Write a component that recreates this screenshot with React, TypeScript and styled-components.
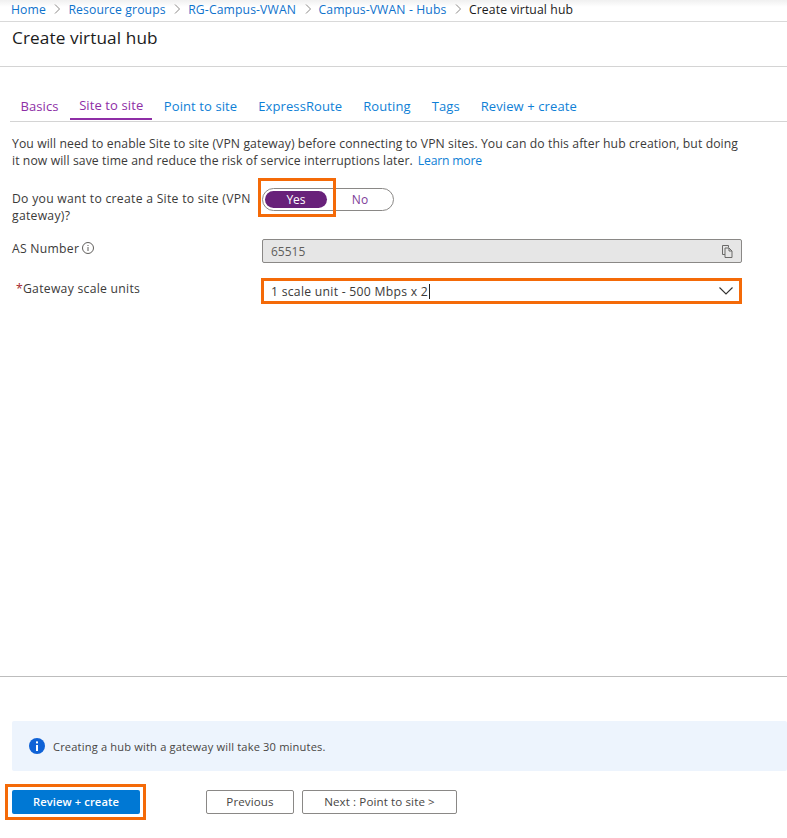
import React from "react";
import styled, { createGlobalStyle } from "styled-components";

const GlobalStyle = createGlobalStyle`
  html, body {
    margin: 0;
    padding: 0;
    background: #fff;
  }
  body {
    font-family: "Open Sans", "Noto Sans", "Liberation Sans", sans-serif;
    color: #323130;
    overflow: hidden;
  }
`;

const Page = styled.div`
  width: 787px;
  height: 838px;
  display: flex;
  flex-direction: column;
`;

const Breadcrumb = styled.nav`
  box-sizing: content-box;
  border-bottom: 1px solid #d9d9d9;
  background: linear-gradient(#f0f0f0, #fff 7px);
  display: flex;
  align-items: center;
  padding: 0 0 3px 11px;
  height: 18px;
  font-size: 12.2px;
  letter-spacing: 0.12px;
  white-space: nowrap;
`;

const Crumb = styled.a<{ $current?: boolean }>`
  color: ${(p) => (p.$current ? "#1a1a1a" : "#0f72cc")};
`;

const CrumbSep = styled.svg`
  width: 8px;
  height: 10px;
  margin: 0 7px 0 7.5px;
  fill: none;
  stroke: #8a8886;
  stroke-width: 1;
`;

const TitleBar = styled.header`
  height: 44px;
  border-bottom: 1px solid #d4d4d4;
  padding-left: 12px;
`;

const Title = styled.h1`
  margin: 5px 0 0;
  font-size: 17.2px;
  line-height: 22px;
  font-weight: 400;
  color: #1b1b1b;
  letter-spacing: 0.1px;
`;

const Tabs = styled.div`
  margin: 29px 0 0 10px;
  height: 25px;
  border-bottom: 1px solid #d4d4d4;
  display: flex;
  font-size: 13px;
  letter-spacing: 0.1px;
`;

const Tab = styled.div<{ $color: string; $active?: boolean }>`
  height: 24px;
  padding: 0 ${(p) => (p.$active ? "9px" : "11px")};
  margin: 0 ${(p) => (p.$active ? "1px" : "-0.5px")};
  display: flex;
  align-items: center;
  padding-bottom: 5px;
  box-sizing: border-box;
  color: ${(p) => p.$color};
  border-bottom: ${(p) => (p.$active ? "2px solid #8e2ea6" : "none")};
  white-space: nowrap;
`;

const Content = styled.main`
  flex: 1;
  padding: 13px 0 0 12px;
`;

const Intro = styled.p`
  margin: 0;
  width: 760px;
  font-size: 12.2px;
  line-height: 17px;
  letter-spacing: 0.09px;
  color: #3b3a39;
`;

const Link = styled.a`
  color: #0f7fd6;
  margin-left: 5px;
  letter-spacing: -0.2px;
`;

const Row = styled.div<{ $top: number; $height: number }>`
  margin-top: ${(p) => p.$top}px;
  height: ${(p) => p.$height}px;
  display: grid;
  grid-template-columns: 250px 480px;
  font-size: 12.2px;
  letter-spacing: 0.27px;
  line-height: 17px;
  color: #3b3a39;
`;

const FieldLabel = styled.div<{ $indent?: number; $pad?: number }>`
  padding-left: ${(p) => p.$indent ?? 0}px;
  padding-top: ${(p) => p.$pad ?? 0}px;
`;

const Required = styled.span`
  color: #a4262c;
`;

const InfoGlyph = styled.svg`
  width: 12px;
  height: 12px;
  margin-left: 3px;
  vertical-align: -1px;
  fill: none;
  stroke: #605e5c;
`;

const ToggleWrap = styled.div`
  position: relative;
  width: 132px;
  height: 23px;
  margin-top: 1px;
`;

const Toggle = styled.div`
  width: 132px;
  height: 23px;
  box-sizing: border-box;
  border: 1px solid #8a8886;
  border-radius: 12px;
  display: grid;
  grid-template-columns: 62px 1fr;
  padding: 2px;
  font-size: 12px;
  letter-spacing: 0;
`;

const ToggleOption = styled.div<{ $on?: boolean }>`
  border-radius: 9px;
  display: flex;
  align-items: center;
  justify-content: center;
  padding-left: ${(p) => (p.$on ? 0 : 2)}px;
  background: ${(p) => (p.$on ? "#68217a" : "transparent")};
  color: ${(p) => (p.$on ? "#fff" : "#7d3c98")};
`;

const Highlight = styled.div`
  position: absolute;
  left: -4px;
  top: -10px;
  width: 78px;
  height: 39px;
  box-sizing: border-box;
  border: 3px solid #f46a08;
`;

const ReadOnlyInput = styled.div`
  height: 24px;
  box-sizing: border-box;
  border: 1px solid #8a8886;
  border-radius: 2px;
  background: #e6e6e6;
  display: flex;
  align-items: center;
  justify-content: space-between;
  padding: 0 8px;
  font-size: 12px;
  letter-spacing: 0;
  color: #605e5c;
`;

const CopyIcon = styled.svg`
  width: 12px;
  height: 13px;
  fill: none;
  stroke: #6b6a69;
`;

const Select = styled.div`
  height: 26px;
  margin: -1px 0 0 -1px;
  box-sizing: border-box;
  border: 3px solid #f46a08;
  display: flex;
  align-items: center;
  justify-content: space-between;
  padding: 0 6px 0 7px;
  font-size: 12.2px;
  color: #3b3a39;
`;

const Caret = styled.span`
  display: inline-block;
  width: 1px;
  height: 15px;
  background: #222;
  margin-left: 1px;
  vertical-align: -3px;
`;

const Chevron = styled.svg`
  width: 14px;
  height: 8px;
  fill: none;
  stroke: #323130;
  stroke-width: 1.1;
`;

const Footer = styled.footer`
  height: 161px;
  border-top: 1px solid #bdbdbd;
  box-sizing: content-box;
`;

const InfoBox = styled.div`
  margin: 44px 0 0 12px;
  height: 50px;
  background: #edf4fd;
  border-radius: 2px;
  display: flex;
  align-items: center;
  padding-left: 17px;
  gap: 8px;
  font-size: 11.1px;
  letter-spacing: 0.17px;
  color: #484644;
`;

const Actions = styled.div`
  margin: 13px 0 0 5px;
  display: flex;
  align-items: center;
`;

const PrimaryFrame = styled.div`
  width: 141px;
  height: 36px;
  box-sizing: border-box;
  border: 3px solid #f46a08;
  padding: 3px 4px;
  margin-right: 60px;
`;

const PrimaryButton = styled.button`
  width: 128px;
  height: 24px;
  display: block;
  padding: 0 0 2px;
  border: none;
  border-radius: 2px;
  background: #0078d4;
  color: #fff;
  font: 600 11.2px "Open Sans", sans-serif;
  letter-spacing: 0.1px;
`;

const SecondaryButton = styled.button<{ $width: number }>`
  width: ${(p) => p.$width}px;
  height: 24px;
  margin-right: 8px;
  padding: 0 0 1px;
  box-sizing: border-box;
  border: 1px solid #8a8886;
  border-radius: 2px;
  background: #fff;
  color: #484644;
  font: 400 11.6px "Open Sans", sans-serif;
  letter-spacing: 0.1px;
`;

const crumbs = ["Home", "Resource groups", "RG-Campus-VWAN", "Campus-VWAN - Hubs"];

const tabs = [
  { label: "Basics", color: "#8e2ea6" },
  { label: "Site to site", color: "#8e2ea6", active: true },
  { label: "Point to site", color: "#0f7fd6" },
  { label: "ExpressRoute", color: "#0f7fd6" },
  { label: "Routing", color: "#0f7fd6" },
  { label: "Tags", color: "#0f7fd6" },
  { label: "Review + create", color: "#0f7fd6" },
];

export default function App() {
  return (
    <Page>
      <GlobalStyle />
      <Breadcrumb>
        {crumbs.map((c) => (
          <React.Fragment key={c}>
            <Crumb>{c}</Crumb>
            <CrumbSep viewBox="0 0 8 10">
              <path d="M2 .5 6.5 5 2 9.5" />
            </CrumbSep>
          </React.Fragment>
        ))}
        <Crumb $current>Create virtual hub</Crumb>
      </Breadcrumb>
      <TitleBar>
        <Title>Create virtual hub</Title>
      </TitleBar>
      <Tabs>
        {tabs.map((t) => (
          <Tab key={t.label} $color={t.color} $active={t.active}>
            {t.label}
          </Tab>
        ))}
      </Tabs>
      <Content>
        <Intro>
          You will need to enable Site to site (VPN gateway) before connecting to VPN sites. You can do this after hub
          creation, but doing
          <br />
          it now will save time and reduce the risk of service interruptions later.
          <Link>Learn more</Link>
        </Intro>
        <Row $top={18} $height={34}>
          <FieldLabel $pad={3}>Do you want to create a Site to site (VPN gateway)?</FieldLabel>
          <ToggleWrap>
            <Toggle>
              <ToggleOption $on>Yes</ToggleOption>
              <ToggleOption>No</ToggleOption>
            </Toggle>
            <Highlight />
          </ToggleWrap>
        </Row>
        <Row $top={18} $height={24}>
          <FieldLabel $pad={1}>
            AS Number
            <InfoGlyph viewBox="0 0 12 12">
              <circle cx="6" cy="6" r="5.5" />
              <path d="M6 5v4M6 3v1" />
            </InfoGlyph>
          </FieldLabel>
          <ReadOnlyInput>
            65515
            <CopyIcon viewBox="0 0 12 13">
              <path d="M7.5 2.5V.5h-6v9h2.5" />
              <path d="M4 3h4l3 3v6.5H4zM8 3v3h3" />
            </CopyIcon>
          </ReadOnlyInput>
        </Row>
        <Row $top={16} $height={25}>
          <FieldLabel $indent={4} $pad={1}>
            <Required>*</Required>Gateway scale units
          </FieldLabel>
          <Select>
            <span>
              1 scale unit - 500 Mbps x 2
              <Caret />
            </span>
            <Chevron viewBox="0 0 14 8">
              <path d="M.5.5 7 7l6.5-6.5" />
            </Chevron>
          </Select>
        </Row>
      </Content>
      <Footer>
        <InfoBox>
          <svg width="16" height="16" viewBox="0 0 16 16">
            <circle cx="8" cy="8" r="8" fill="#0f62d6" />
            <rect x="7" y="7" width="2" height="6" fill="#fff" />
            <rect x="7" y="3.4" width="2" height="2" fill="#fff" />
          </svg>
          Creating a hub with a gateway will take 30 minutes.
        </InfoBox>
        <Actions>
          <PrimaryFrame>
            <PrimaryButton>Review + create</PrimaryButton>
          </PrimaryFrame>
          <SecondaryButton $width={88}>Previous</SecondaryButton>
          <SecondaryButton $width={155}>Next : Point to site &gt;</SecondaryButton>
        </Actions>
      </Footer>
    </Page>
  );
}
